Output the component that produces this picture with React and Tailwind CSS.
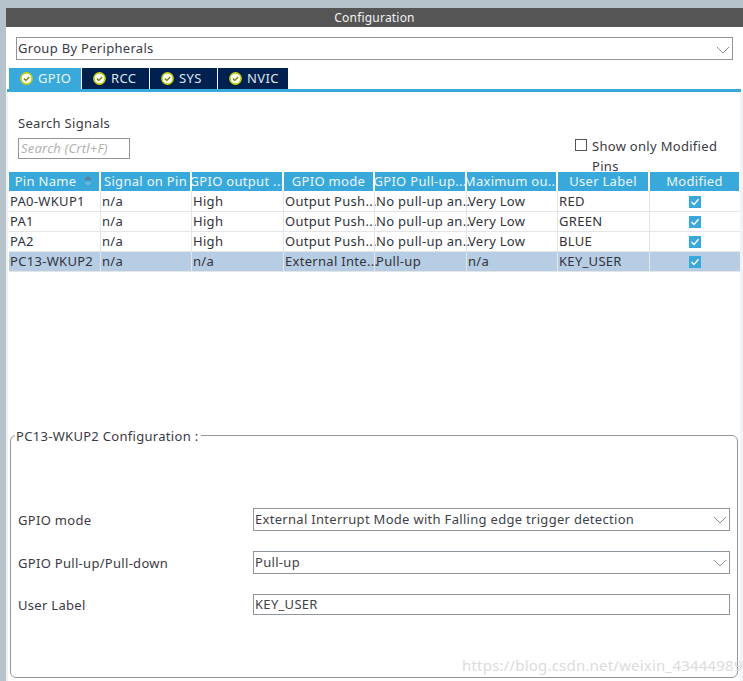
const F = "font-['Liberation_Sans',Arial,sans-serif]";

const Chevron = ({ className = "" }) => (
  <svg width="14" height="8" viewBox="0 0 14 8" className={className} fill="none" stroke="#8a9299" strokeWidth="1">
    <path d="M1 1 L7 7 L13 1" />
  </svg>
);

const TabCheck = () => (
  <svg width="13" height="13" viewBox="0 0 13 13" className="shrink-0">
    <circle cx="6.5" cy="6.5" r="5.6" fill="#ffffff" stroke="#c3d010" strokeWidth="1.6" />
    <path d="M3.9 6.5 L5.8 8.4 L9.2 4.9" fill="none" stroke="#7f8a10" strokeWidth="1.5" />
  </svg>
);

const Tab = ({ label, left, width, active }) => (
  <div
    className={`absolute top-[68px] h-[21px] flex items-center gap-[5px] pl-[11px] text-[13px] tracking-[0.35px] ${active ? "bg-[#39a9dc] text-[#eaf6fb]" : "bg-[#00214f] text-[#dfe5ee]"}`}
    style={{ left, width }}
  >
    <TabCheck />
    <span>{label}</span>
  </div>
);

const cols = [
  [9, 90], [101, 89], [192, 90], [284, 89], [375, 90], [467, 89], [558, 90], [650, 89],
];

const headers = ["Pin Name", "Signal on Pin", "GPIO output ...", "GPIO mode", "GPIO Pull-up...", "Maximum ou...", "User Label", "Modified"];

const rows = [
  ["PA0-WKUP1", "n/a", "High", "Output Push...", "No pull-up an...", "Very Low", "RED"],
  ["PA1", "n/a", "High", "Output Push...", "No pull-up an...", "Very Low", "GREEN"],
  ["PA2", "n/a", "High", "Output Push...", "No pull-up an...", "Very Low", "BLUE"],
  ["PC13-WKUP2", "n/a", "n/a", "External Inte...", "Pull-up", "n/a", "KEY_USER"],
];

const Check = () => (
  <span className="w-[12px] h-[12px] bg-[#39a9dc] flex items-center justify-center">
    <svg width="10" height="10" viewBox="0 0 10 10" fill="none" stroke="#ffffff" strokeWidth="1.4">
      <path d="M1.5 5 L4 7.5 L8.5 2.2" />
    </svg>
  </span>
);

const Box = ({ top, height = 23, children }) => (
  <div
    className="absolute left-[253px] w-[477px] border border-[#8f979c] bg-white flex items-center pl-[1px] text-[13px] tracking-[0.3px] text-[#3f3f46]"
    style={{ top, height }}
  >
    {children}
  </div>
);

export default function App() {
  return (
    <div className={`${F} relative w-[743px] h-[681px] overflow-hidden bg-white text-[13px] text-[#3a3a44]`}>
      <div className="absolute left-0 top-0 w-full h-[8px] bg-[#b6c3ca]" />
      <div className="absolute left-0 top-0 w-[6px] h-full bg-[#b6c3ca]" />
      <div className="absolute left-[6px] top-[91px] w-[2px] h-[590px] bg-[#eef0f1]" />
      <div className="absolute left-[740px] top-[91px] w-[3px] h-[590px] bg-[#f2f3f4]" />
      <div className="absolute left-[6px] top-[8px] right-0 h-[19px] bg-[#545554] text-[#f2f2f2] text-[12px] tracking-[0.2px] flex items-center justify-center">
        Configuration
      </div>

      <div className="absolute left-[16px] top-[37px] w-[717px] h-[23px] border border-[#8f979c] flex items-center pl-[1px] tracking-[0.3px]">
        Group By Peripherals
        <Chevron className="absolute right-[2px] top-[8px]" />
      </div>

      <Tab label="GPIO" left={9} width={72} active />
      <Tab label="RCC" left={82} width={67} />
      <Tab label="SYS" left={150} width={67} />
      <Tab label="NVIC" left={218} width={70} />
      <div className="absolute left-[7px] top-[89px] w-[734px] h-[3px] bg-[#39a9dc]" />

      <div className="absolute left-[18px] top-[114px] tracking-[0.3px]">Search Signals</div>
      <div className="absolute left-[18px] top-[138px] w-[112px] h-[21px] border border-[#8f979c] flex items-center pl-[2px] italic text-[#b2b2b2] text-[13px] tracking-[0.2px]">
        Search (Crtl+F)
      </div>

      <div className="absolute left-[575px] top-[139px] w-[12px] h-[12px] border border-[#555555]" />
      <div className="absolute left-[592px] top-[137px] tracking-[0.3px]">Show only Modified Pins</div>

      <div className="absolute left-[9px] top-[172px] w-[731px] h-[100px]">
        {headers.map((h, i) => (
          <div
            key={h}
            className="absolute top-0 h-[19px] bg-[#39a9dc] text-[#eaf6fb] flex items-center justify-center whitespace-nowrap tracking-[0.3px]"
            style={{ left: cols[i][0] - 9, width: cols[i][1] }}
          >
            {h}
            {i === 0 && (
              <svg width="10" height="11" viewBox="0 0 10 11" className="ml-[7px]">
                <path d="M5 0 L9 4 L1 4 Z" fill="#5d7f92" />
                <path d="M5 10 L9 6 L1 6 Z" fill="#6fb6d8" />
              </svg>
            )}
          </div>
        ))}
        {rows.map((r, ri) => (
          <div
            key={r[0]}
            className={`absolute left-0 w-[731px] h-[20px] border-b border-[#e3e5e7] ${ri === 3 ? "bg-[#b7cde4]" : "bg-white"}`}
            style={{ top: 20 + ri * 20 }}
          >
            {r.map((c, ci) => (
              <div
                key={ci}
                className="absolute top-0 h-[19px] flex items-center pl-[1px] whitespace-nowrap tracking-[0.3px] text-[#33333b]"
                style={{ left: cols[ci][0] - (ci === 0 ? 9 : 9), width: cols[ci][1] }}
              >
                {c}
              </div>
            ))}
            {cols.slice(1).map((c, ci) => (
              <div key={ci} className="absolute top-0 w-[1px] h-[20px] bg-[#e3e5e7]" style={{ left: c[0] - 10 }} />
            ))}
            <div className="absolute top-0 h-[19px] flex items-center justify-center" style={{ left: 641, width: 89 }}>
              <Check />
            </div>
          </div>
        ))}
      </div>

      <div className="absolute left-[10px] top-[435px] w-[728px] h-[243px] border border-[#8f979c] rounded-[6px]" />
      <div className="absolute left-[15px] top-[427px] bg-white pl-[1px] pr-[3px] tracking-[0.3px]">PC13-WKUP2 Configuration :</div>

      <div className="absolute left-[18px] top-[511px] tracking-[0.3px]">GPIO mode</div>
      <div className="absolute left-[18px] top-[554px] tracking-[0.3px]">GPIO Pull-up/Pull-down</div>
      <div className="absolute left-[18px] top-[596px] tracking-[0.3px]">User Label</div>

      <Box top={508}>
        External Interrupt Mode with Falling edge trigger detection
        <Chevron className="absolute right-[2px] top-[7px]" />
      </Box>
      <Box top={551}>
        Pull-up
        <Chevron className="absolute right-[2px] top-[7px]" />
      </Box>
      <Box top={594} height={21}>KEY_USER</Box>

      <div className="absolute left-[462px] top-[654px] text-[15px] tracking-[0.2px] text-[#dcdcdc]">
        https://blog.csdn.net/weixin_43444989
      </div>
    </div>
  );
}
